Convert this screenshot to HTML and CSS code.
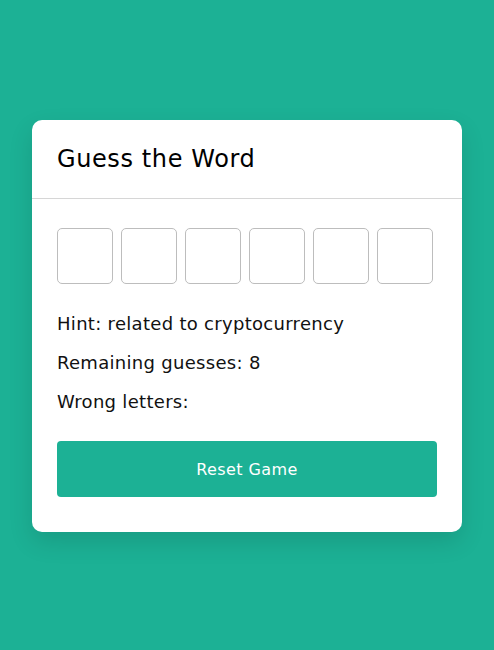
FILE: index.html
```html
<!DOCTYPE html>
<html>
<head>
<meta charset="utf-8">
<link rel="stylesheet" href="styles.css">
</head>
<body>
<div class="page">
  <div class="card">
    <div class="card-header">
      <h1 class="title">Guess the Word</h1>
    </div>
    <div class="card-body">
      <div class="slots">
        <div class="slot"></div>
        <div class="slot"></div>
        <div class="slot"></div>
        <div class="slot"></div>
        <div class="slot"></div>
        <div class="slot"></div>
      </div>
      <p class="info">Hint: related to cryptocurrency</p>
      <p class="info">Remaining guesses: 8</p>
      <p class="info">Wrong letters:</p>
      <button class="reset">Reset Game</button>
    </div>
  </div>
</div>
</body>
</html>
```
FILE: styles.css
```css
html, body {
  margin: 0;
  padding: 0;
}
body {
  background: #1cb195;
  font-family: "DejaVu Sans", "Open Sans", sans-serif;
  color: #111;
}
.page {
  height: 650px;
  display: flex;
  align-items: flex-start;
  justify-content: center;
  padding-top: 120px;
  box-sizing: border-box;
}
.card {
  width: 430px;
  background: #fff;
  border-radius: 10px;
  box-shadow: 0 10px 25px rgba(0, 0, 0, 0.12);
}
.card-header {
  height: 79px;
  box-sizing: border-box;
  padding: 0 25px;
  display: flex;
  align-items: center;
  border-bottom: 1px solid #d6d6d6;
}
.title {
  margin: 0;
  font-size: 24px;
  font-weight: 500;
  line-height: 1;
  letter-spacing: 0.6px;
  color: #000;
}
.card-body {
  padding: 29px 25px 35px;
}
.slots {
  display: flex;
  gap: 8px;
  margin-bottom: 26px;
}
.slot {
  width: 54px;
  height: 54px;
  border: 1px solid #bdbdbd;
  border-radius: 5px;
}
.info {
  margin: 0 0 12px;
  font-size: 18px;
  line-height: 27px;
  letter-spacing: 0.3px;
  color: #111;
}
.reset {
  display: block;
  width: 100%;
  height: 56px;
  margin-top: 26px;
  border: none;
  border-radius: 4px;
  background: #1cb195;
  color: #fff;
  font-family: inherit;
  font-size: 16px;
  letter-spacing: 0.4px;
}
```
